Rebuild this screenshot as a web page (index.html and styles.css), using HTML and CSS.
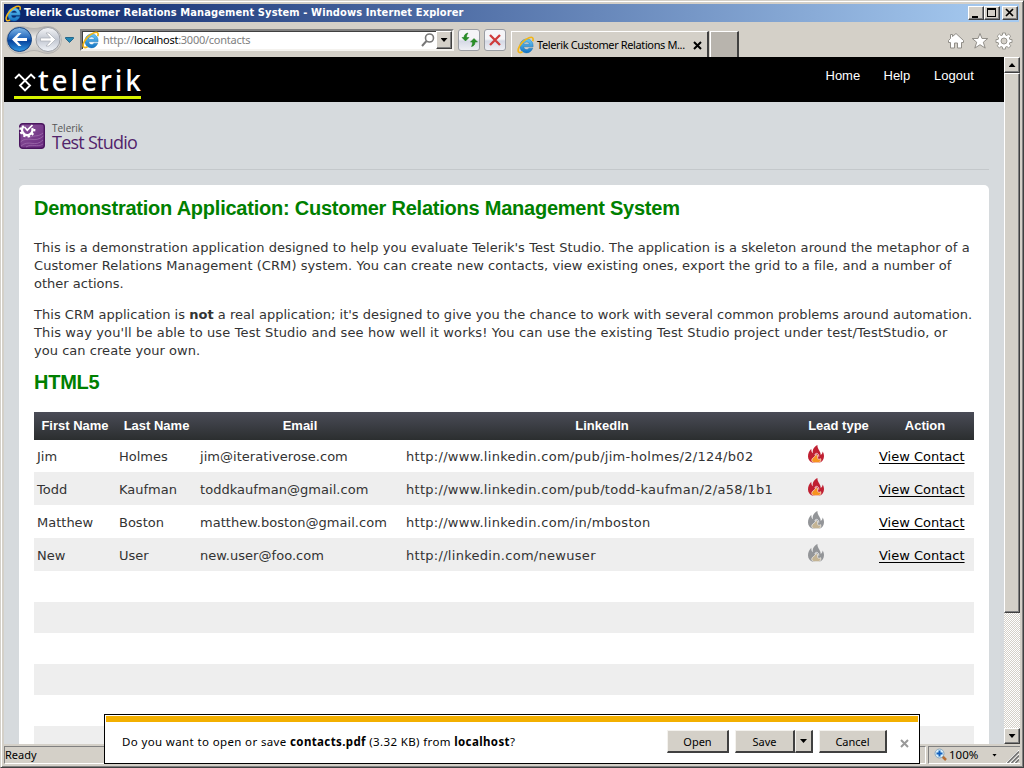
FILE: index.html
```
<!DOCTYPE html>
<html lang="en">
<head>
<meta charset="utf-8">
<title>Telerik Customer Relations Management System</title>
<link rel="stylesheet" href="styles.css">
</head>
<body>
<svg class="defs" aria-hidden="true">
  <defs>
    <linearGradient id="eblue" x1="0" y1="0" x2="0" y2="1"><stop offset="0" stop-color="#69c8f5"/><stop offset="1" stop-color="#1474c4"/></linearGradient>
    <linearGradient id="back" x1="0" y1="0" x2="0" y2="1"><stop offset="0" stop-color="#82b8e8"/><stop offset=".45" stop-color="#2266bb"/><stop offset=".55" stop-color="#06429b"/><stop offset="1" stop-color="#329ae5"/></linearGradient>
    <linearGradient id="fwd" x1="0" y1="0" x2="0" y2="1"><stop offset="0" stop-color="#f5f6f8"/><stop offset=".5" stop-color="#c2c7d1"/><stop offset="1" stop-color="#f2f5fa"/></linearGradient>
    <linearGradient id="shell" x1="0" y1="0" x2="0" y2="1"><stop offset="0" stop-color="#aaa9a8"/><stop offset=".4" stop-color="#eceae7"/><stop offset="1" stop-color="#c4c2be"/></linearGradient>
    <linearGradient id="purple" x1="0" y1="0" x2="1" y2="1"><stop offset="0" stop-color="#8b559a"/><stop offset="1" stop-color="#6a2a80"/></linearGradient>
    <symbol id="ie" viewBox="0 0 16 16">
      <path d="M14.300 9.600H6c.2 2.700 3.300 3.200 4.700 1.200h3.300C13 13.500 11 15 8.500 15 5 15 2.600 12.400 2.600 8.900 2.600 5.400 5.100 2.700 8.600 2.700c3.700 0 6 2.800 5.700 6.900zM6 7.300h5C10.800 4.700 6.400 4.700 6 7.300z" fill="url(#eblue)" stroke="#1672b5" stroke-width=".4"/>
      <path d="M14 4.700C15 1.700 13.700.4 10.700 1.500 6.300 3.200 2.400 7.700 1.300 11.200.4 14.300 2 15.700 4.900 14" fill="none" stroke="#f2b619" stroke-width="1.500"/>
    </symbol>
    <symbol id="flame" viewBox="0 0 16 18">
      <path d="M9.400 0C5.500 2 4.300 5.100 4.800 8.200 3.600 7.400 3.300 5.800 3.300 3.800 1.200 6 0 8.400 0 11.500c0 3.200 2 5.500 5 6.300h6.500c2.900-1.300 4.500-3.600 4.500-6.600 0-1.600-.4-3.200-1.500-4.600.1 1.700-.5 2.800-1.800 3.300C13 6.300 9.400 4.700 9.400 0z" fill="currentColor"/>
      <path d="M7.700 9.500c.3 2.300-4 3.200-4 5.600 0 1.500 1.300 2.500 3 2.500H11c1.500-.7 2.200-2.100 1.700-3.900-.8.700-2.400.8-2.900 0-.6-1 .2-2.500-.4-3.500-.4-.4-1-.7-1.700-.7z" stroke="#fff" stroke-width=".6"/>
      <path d="M6.800 9.800C7.500 7.400 11 7.900 10.800 11.700" stroke="#fff" stroke-width=".7" fill="none"/>
    </symbol>
  </defs>
</svg>
<div class="window">
  <div class="titlebar">
    <svg class="ie16"><use href="#ie"/></svg>
    <span class="caption">Telerik Customer Relations Management System - Windows Internet Explorer</span>
    <div class="winbtns">
      <span class="bevel winbtn"><svg width="14" height="12"><path d="M3 9h6v2H3z"/></svg></span>
      <span class="bevel winbtn"><svg width="14" height="12"><path d="M2 1h9v9H2zM3 3v6h7V3z" fill-rule="evenodd"/></svg></span>
      <span class="bevel winbtn close"><svg width="14" height="12"><path d="M3 2l7 7M10 2L3 9" stroke="#000" stroke-width="1.700"/></svg></span>
    </div>
  </div>
  <div class="toolbar">
    <svg class="nav" viewBox="0 0 74 35">
      <path d="M16 4.500c6 0 8 2 14 2s8-2 14-2a13.500 13.500 0 0 1 0 27c-6 0-8-3-14-3s-8 3-14 3a13.500 13.500 0 0 1 0-27z" fill="url(#shell)" stroke="#b5b3b0"/>
      <circle cx="15.500" cy="17.500" r="12" fill="url(#back)" stroke="#164584"/>
      <circle cx="44" cy="17.500" r="12" fill="url(#fwd)" stroke="#9a9da3"/>
      <path d="M8 17.500l6.500-6.500h3l-4.500 5h10v3H13l4.500 5h-3z" fill="#fff"/>
      <path d="M51.500 17.500L45 11h-3l4.500 5h-10v3h10L42 24h3z" fill="#fff" stroke="#a9adb5" stroke-width=".7"/>
      <path d="M61.500 15.500h8v1l-4 4-4-4z" fill="#2388b4" stroke="#12577f" stroke-width=".8"/>
    </svg>
    <div class="address">
      <svg class="ie18"><use href="#ie"/></svg>
      <span class="url">http://<b>localhost</b>:3000/contacts</span>
      <svg class="search" viewBox="0 0 14 14"><circle cx="8.500" cy="5" r="4" fill="none" stroke="#777" stroke-width="1.600"/><path d="M5.500 8L1 13" stroke="#777" stroke-width="2"/></svg>
      <span class="bevel drop"><i class="tri"></i></span>
    </div>
    <span class="toolbtn"><svg width="18" height="18"><path d="M8 2C5.500 2.500 4 4 4 6.500H2L5.500 10 9 6.500H6.500C6.500 4.500 7 3.500 8 2zM11.500 15.500c2.500-.5 3.500-2 3.500-4.500h2.500L14 7.500 10.500 11h2c0 2-.3 3-1 4.500z" fill="#299026" stroke="#167718" stroke-width=".5"/></svg></span>
    <span class="toolbtn stop"><svg width="18" height="18"><path d="M4 4l10 10M14 4L4 14" stroke="#cf3b3b" stroke-width="2.300"/></svg></span>
    <div class="tab"><svg class="ie18"><use href="#ie"/></svg><span class="tabtext">Telerik Customer Relations M...</span><svg class="tabx" viewBox="0 0 9 9"><path d="M1 1l7 7M8 1L1 8" stroke="#000" stroke-width="2"/></svg></div>
    <div class="newtab"></div>
    <div class="cmds">
      <svg viewBox="0 0 18 18"><path d="M9 1.500l7.500 7v2h-2V16h-4v-5h-3v5h-4v-5.500h-2v-2L3.500 6.500v-4h2v2z" fill="#fff" stroke="#918e88"/></svg>
      <svg viewBox="0 0 18 18"><path d="M9 1.500l2 5h5.800l-4.500 3.700 1.900 5.900L9 12.700l-5.200 3.400 1.900-5.900L1.200 6.500H7z" fill="#fff" stroke="#918e88"/></svg>
      <svg viewBox="0 0 18 18"><path d="M7.500 1h3v2l1.500.6L13.600 2l2.200 2.200-1.500 1.700.6 1.600H17v3h-2.100l-.6 1.600 1.500 1.700-2.200 2.200-1.600-1.500-1.500.6V17h-3v-1.900L6 14.500 4.400 16l-2.200-2.200 1.500-1.700-.6-1.600H1v-3h2.100l.6-1.600-1.500-1.700L4.400 2 6 3.600 7.500 3zM9 6a3 3 0 1 0 0 6 3 3 0 0 0 0-6z" fill="#fff" fill-rule="evenodd" stroke="#918e88" stroke-width=".9"/></svg>
    </div>
  </div>
  <div class="viewport">
    <main class="page">
      <header class="site">
        <div class="brand"><svg width="22" height="21" viewBox="0 0 22 21"><path d="M1 6.500l4-4 11 11-5 5-5-5 11-11 4 4" fill="none" stroke="#fff" stroke-width="1.900"/></svg><span>telerik</span></div>
        <nav><a class="n1">Home</a><a class="n2">Help</a><a class="n3">Logout</a></nav>
      </header>
      <div class="product">
        <svg width="26" height="26" viewBox="0 0 26 26"><rect x=".7" y=".7" width="24.600" height="24.600" rx="3" fill="url(#purple)" stroke="#4b155f" stroke-width="1.400"/><path d="M1.500 19c7-7 14 2 23-6M2 23c8-7 14 2 22-6M7 24c6-4 11 1 17-3M11 14c6-2 8 0 13-4" fill="none" stroke="#b58ac0" stroke-width=".7" opacity=".7"/><path d="M13.200 5.200A5.200 5.200 0 1 1 4.800 3" fill="none" stroke="#fff" stroke-width="2.400"/><path d="M15.300 6A7 7 0 1 1 2 3.500" fill="none" stroke="#fff" stroke-width="2.200" stroke-dasharray="2.300 2.100"/><path d="M5.500 4l2.800 3.200L13.500 2" fill="none" stroke="#fff" stroke-width="1.700"/></svg>
        <div class="pname"><span class="p1">Telerik</span><span class="p2">Test Studio</span></div>
      </div>
      <section class="card">
        <h1>Demonstration Application: Customer Relations Management System</h1>
        <p><span class="l1">This is a demonstration application designed to help you evaluate Telerik's Test Studio. The application is a skeleton around the metaphor of a</span><span class="l2">Customer Relations Management (CRM) system. You can create new contacts, view existing ones, export the grid to a file, and a number of</span><span class="l3">other actions.</span></p>
        <p><span class="l4">This CRM application is <b>not</b> a real application; it's designed to give you the chance to work with several common problems around automation.</span><span class="l5">This way you'll be able to use Test Studio and see how well it works! You can use the existing Test Studio project under test/TestStudio, or</span><span class="l6">you can create your own.</span></p>
        <h2>HTML5</h2>
        <table>
          <colgroup><col class="c1"><col class="c2"><col class="c3"><col class="c4"><col class="c5"><col class="c6"></colgroup>
          <thead><tr><th>First Name</th><th>Last Name</th><th>Email</th><th>LinkedIn</th><th>Lead type</th><th>Action</th></tr></thead>
          <tbody>
            <tr class="first"><td>Jim</td><td>Holmes</td><td>jim@iterativerose.com</td><td>http://www.linkedin.com/pub/jim-holmes/2/124/b02</td><td><svg class="flame hot"><use href="#flame"/></svg></td><td><a>View Contact</a></td></tr>
            <tr><td>Todd</td><td>Kaufman</td><td>toddkaufman@gmail.com</td><td>http://www.linkedin.com/pub/todd-kaufman/2/a58/1b1</td><td><svg class="flame hot"><use href="#flame"/></svg></td><td><a>View Contact</a></td></tr>
            <tr><td>Matthew</td><td>Boston</td><td>matthew.boston@gmail.com</td><td>http://www.linkedin.com/in/mboston</td><td><svg class="flame cold"><use href="#flame"/></svg></td><td><a>View Contact</a></td></tr>
            <tr><td>New</td><td>User</td><td>new.user@foo.com</td><td>http://linkedin.com/newuser</td><td><svg class="flame cold"><use href="#flame"/></svg></td><td><a>View Contact</a></td></tr>
          </tbody>
        </table>
        <div class="stripes"></div>
      </section>
    </main>
    <div class="scroll"><span class="bevel sbtn"><i class="tri up"></i></span><span class="bevel thumb"></span><span class="track"></span><span class="bevel sbtn"><i class="tri"></i></span></div>
  </div>
  <footer class="status">
    <div class="ready"><span>Ready</span></div>
    <div class="zoom"><svg width="14" height="14" viewBox="0 0 14 14"><path d="M8 8l4 4" stroke="#b76f35" stroke-width="2.500"/><circle cx="5.500" cy="5.500" r="4.500" fill="#d7effb" stroke="#8ba7bd"/><path d="M5.500 2.500v6M2.500 5.500h6" stroke="#1260bc" stroke-width="2"/></svg><span class="pct">100%</span><i class="tri small"></i></div>
    <svg class="grip" width="13" height="13"><path d="M0 13L13 0M4 13l9-9M8 13l5-5" stroke="#fff"/><path d="M1.500 13L13 1.500M5.500 13L13 5.500M9.500 13L13 9.500" stroke="#777" stroke-width="1.600"/></svg>
  </footer>
  <div class="notice">
    <span class="msg">Do you want to open or save <b>contacts.pdf</b> (3.32 KB) from <b>localhost</b>?</span>
    <span class="btn open">Open</span><span class="btn save">Save</span><span class="btn arrow"><i class="tri"></i></span><span class="btn cancel">Cancel</span>
    <svg class="dismiss" viewBox="0 0 9 9"><path d="M1 1l7 7M8 1L1 8" stroke="#999" stroke-width="2"/></svg>
  </div>
</div>
</body>
</html>
```
FILE: styles.css
```
* { box-sizing: border-box; }
body { margin: 0; width: 1024px; height: 768px; overflow: hidden; font-family: "DejaVu Sans", sans-serif; }
svg { display: block; flex: none; }
.defs { position: absolute; width: 0; height: 0; }
.window { position: relative; width: 1024px; height: 768px; display: flex; flex-direction: column; background: #d4d0c8; border: 1px solid #d4d0c8; border-right-color: #404040; border-bottom-color: #404040; padding: 2px; box-shadow: inset 1px 1px #fff, inset -1px -1px #808080; }
.titlebar { height: 19px; margin: 0 2px 0 1px; border-top: 1px solid #d4d0c8; display: flex; align-items: center; flex: none; background: linear-gradient(90deg, #0a246a, #a6caf0 98%); background-clip: padding-box; color: #fff; }
.ie16 { width: 17px; height: 17px; margin-left: 1px; }
.caption { font: bold 11px/18px "DejaVu Sans Condensed", "DejaVu Sans", sans-serif; font-stretch: condensed; margin-left: 2px; letter-spacing: .115px; white-space: nowrap; }
.winbtns { display: flex; margin-left: auto; margin-right: 1px; }
.bevel { background: #d4d0c8; border: 1px solid #fff; border-right-color: #404040; border-bottom-color: #404040; box-shadow: inset -1px -1px #808080; }
.winbtn { width: 16px; height: 14px; }
.close { margin-left: 2px; }
.toolbar { height: 35px; flex: none; display: flex; align-items: flex-start; padding-top: 1px; }
.nav { width: 74px; height: 35px; margin-left: 1px; margin-top: -1px; }
.address { width: 374px; height: 22px; margin: 6px 0 0 2px; background: #fff; border: 2px solid #404040; border-color: #808080 #f4f2ee #f4f2ee #808080; box-shadow: inset 1px 1px #404040; display: flex; align-items: center; }
.ie18 { width: 18px; height: 18px; }
.url { font-family: "Noto Sans", sans-serif; font-size: 11px; line-height: 18px; color: #808080; margin-left: 3px; white-space: nowrap; letter-spacing: -.25px; }
.url b { font-weight: 400; color: #000; }
.search { width: 14px; height: 14px; margin-left: auto; margin-right: 1px; }
.drop { width: 16px; height: 18px; }
.tri { display: block; width: 7px; height: 4px; background: #000; clip-path: polygon(0 0, 100% 0, 50% 100%); }
.tri.up { clip-path: polygon(50% 0, 100% 100%, 0 100%); }
.drop, .sbtn, .arrow { display: flex; align-items: center; justify-content: center; }
.toolbtn { width: 22px; height: 22px; margin: 6px 0 0 4px; border: 1px solid #9a9da3; border-radius: 3px; padding: 1px; background: linear-gradient(#f5f5f8 45%, #d5d9e5 55%, #eff0f5); }
.stop { margin-left: 4px; }
.tab { width: 198px; height: 27px; margin: 8px 0 0 5px; padding-left: 5px; border: 1px solid #fff; border-right: 2px solid #404040; border-bottom: 0; display: flex; align-items: center; }
.tabtext { font: 11px/20px "Noto Sans", sans-serif; letter-spacing: -.38px; margin-left: 2px; width: 152px; white-space: nowrap; }
.tabx { width: 9px; height: 9px; margin-left: 4px; }
.newtab { width: 29px; height: 26px; margin: 8px 0 0 1px; background: #b8b4ad; border: 1px solid #fff; border-right: 2px solid #404040; border-bottom: 0; }
.cmds { margin: 9px 8px 0 auto; display: flex; gap: 6px; }
.cmds svg { width: 18px; height: 18px; }
.viewport { height: 687px; flex: none; display: flex; margin: 0 1px; }
.page { width: 1000px; height: 687px; overflow: hidden; background: #d6dadd; }
.site { height: 45px; background: #000; display: flex; justify-content: space-between; }
.brand { height: 33px; margin: 9px 0 0 10px; width: 127px; border-bottom: 3px solid #d8f400; display: flex; align-items: flex-start; color: #fff; }
.brand svg { margin-top: 6px; }
.brand span { font: 500 28px/28px "Noto Sans", sans-serif; letter-spacing: 2.9px; margin-left: 2px; white-space: nowrap; }
.site nav { display: flex; width: 178.5px; font: 13px/18px "Liberation Sans", Arial, sans-serif; color: #fff; padding-top: 10px; }
.n1 { width: 58px; } .n2 { width: 50.5px; }
.product { display: flex; height: 68px; margin: 0 15px 15px; padding-top: 21px; border-bottom: 1px solid #c4c8cb; }
.pname { display: flex; flex-direction: column; margin-left: 7px; }
.p1 { font: 10px/11px "Open Sans", sans-serif; color: #555; }
.p2 { font: 18px/16px "Open Sans", sans-serif; color: #52246b; letter-spacing: -.75px; white-space: nowrap; }
.card { width: 970px; height: 700px; margin-left: 15px; padding: 12px 15px 0; background: #fff; border-radius: 5px 5px 0 0; color: #333; font-size: 13px; }
h1, h2 { margin: 0; font: bold 20px/23px "Liberation Sans", Arial, sans-serif; color: #008000; letter-spacing: -.235px; white-space: nowrap; }
p { margin: 0; padding-top: 19px; line-height: 18px; }
p + p { padding-top: 13px; }
p > span { display: block; white-space: nowrap; }
.l1, .l2 { letter-spacing: .062px; }
.l4 { letter-spacing: .028px; }
.l5 { letter-spacing: .13px; }
.l6 { letter-spacing: .04px; }
h2 { margin-top: 11px; }
table { width: 940px; margin-top: 18px; border-collapse: collapse; table-layout: fixed; }
.c1 { width: 82px; } .c2 { width: 81px; } .c3 { width: 206px; } .c4 { width: 398px; } .c5 { width: 75px; } .c6 { width: 98px; }
thead tr { height: 28px; background: linear-gradient(#4a4c57, #2b2e2f); }
th { padding: 0; font: bold 13px/16px "Liberation Sans", Arial, sans-serif; color: #fff; }
tbody tr { height: 33px; }
tbody tr.first { height: 32px; }
tbody tr:nth-child(even) { background: #eee; }
td { padding: 2px 3px 0; line-height: 16px; white-space: nowrap; }
.first td { padding-top: 1px; }
td:nth-child(3) { letter-spacing: .04px; }
td:nth-child(4) { letter-spacing: .29px; }
td a { color: #000; text-decoration: underline; text-underline-offset: 2px; }
.flame { width: 16px; height: 18px; margin: -6px 0 0 4px; }
.first .flame { margin-top: -5px; }
.hot { color: #c02032; fill: #f79320; }
.cold { color: #939598; fill: #c4b494; }
.stripes { height: 200px; background: repeating-linear-gradient(#fff 0 31px, #eee 31px 62px); }
.scroll { width: 16px; display: flex; flex-direction: column; background: #eae8e3; }
.sbtn { height: 16px; flex: none; }
.thumb { height: 540px; flex: none; }
.track { flex: 1; background: repeating-conic-gradient(#fff 0 25%, #d4d0c8 0 50%) 0 0 / 2px 2px; }
.status { height: 20px; margin: 0 1px; flex: none; display: flex; padding-top: 2px; font: 11px/14px "Noto Sans", sans-serif; }
.ready { width: 922px; height: 18px; border: 1px solid #808080; border-right-color: #fff; border-bottom-color: #fff; padding: 1px 0 0; margin-right: 2px; }
.zoom { width: 92px; height: 18px; border: 1px solid #808080; border-right: 0; border-bottom-color: #fff; display: flex; align-items: center; padding-left: 5px; }
.pct { margin-left: 1px; width: 30px; font-size: 11.5px; }
.tri.small { width: 5px; height: 3px; margin-left: 13px; }
.grip { position: absolute; right: 4px; bottom: 4px; }
.notice { position: absolute; left: 103px; top: 713px; width: 816px; height: 50px; background: #fff; border: 1px solid #000; display: flex; align-items: flex-start; padding: 16px 0 0 17px; font: 11.5px/24px "Noto Sans", sans-serif; }
.notice::before { content: ""; position: absolute; left: 1px; top: 1px; right: 1px; height: 6px; background: #f3b000; }
.msg { width: 545px; line-height: 22px; letter-spacing: .37px; white-space: nowrap; }
.btn { height: 23px; font-size: 11px; line-height: 21px; text-align: center; background: #d4d0c8; border: 1px solid #f4f2ee; border-right: 2px solid #404040; border-bottom: 2px solid #404040; margin-top: -1px; }
.btn.open { width: 62px; } .btn.save { width: 60px; margin-left: 6px; } .btn.arrow { width: 18px; } .btn.cancel { width: 68px; margin-left: 6px; }
.dismiss { width: 9px; height: 9px; margin: 8px 0 0 13px; }
```
